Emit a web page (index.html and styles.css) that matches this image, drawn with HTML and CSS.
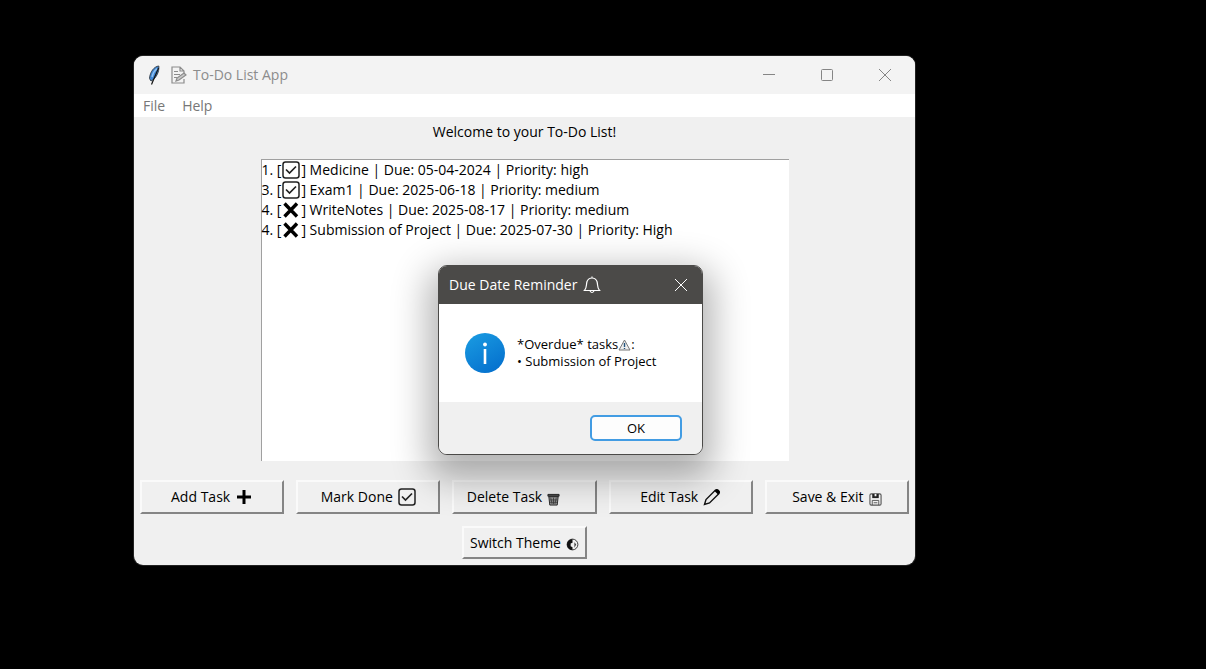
FILE: index.html
```html
<!DOCTYPE html>
<html lang="en">
<head>
<meta charset="utf-8">
<title>To-Do List App</title>
<link rel="stylesheet" href="styles.css">
</head>
<body>
<svg class="defs" aria-hidden="true">
  <symbol id="check" viewBox="0 0 18 18"><rect x="1" y="1" width="16" height="16" rx="2.5" fill="none" stroke="#222" stroke-width="1.500"/><path d="M4 8.500 7.500 12 14 5.500" fill="none" stroke="#222" stroke-width="1.700"/></symbol>
  <symbol id="cross" viewBox="0 0 18 18"><path d="M2.500 2.500 15 15.500M15 2.500 2.500 15.500" fill="none" stroke="#000" stroke-width="3.400"/></symbol>
</svg>
<main class="window">
  <header class="titlebar">
    <svg class="feather" viewBox="0 0 12 20"><path d="M10.800 1C6 1.500 2 7 1.500 13.500L3 16C8 13.500 11.500 7 10.800 1Z" fill="#3f86d4" stroke="#39444f" stroke-width="1"/><path d="M10.500 3Q7.500 10 3.500 19.500" fill="none" stroke="#111" stroke-width="1.200"/><path d="M9 3.500Q5 7 4 12" fill="none" stroke="#8fc1f2" stroke-width="1.500"/></svg>
    <svg class="memo" viewBox="0 0 16 18" fill="none" stroke="#8c8c8c" stroke-width="1.200"><path d="M13 8V5L9 1H1v16h12v-4M9 1v4h4M3 5.500h4M3 8.500h6M3 11.500h3"/><path d="M5 15l1-3 7-5 2 2-7 5Z" fill="#c8c8c8"/></svg>
    <h1 class="title">To-Do List App</h1>
    <div class="controls">
      <button class="control" aria-label="Minimize"><svg viewBox="0 0 14 14"><path d="M1 6.500h12"/></svg></button>
      <button class="control" aria-label="Maximize"><svg viewBox="0 0 14 14"><rect x="1.500" y="1.500" width="11" height="11" rx="1"/></svg></button>
      <button class="control" aria-label="Close"><svg viewBox="0 0 14 14"><path d="M1 1l12 12M13 1 1 13"/></svg></button>
    </div>
  </header>
  <nav class="menubar"><button class="menu">File</button><button class="menu">Help</button></nav>
  <section class="content">
    <p class="welcome">Welcome to your To-Do List!</p>
    <ul class="tasks">
      <li class="task"><span>1. [</span><svg class="mark"><use href="#check"/></svg><span>] Medicine | Due: 05-04-2024 | Priority: high</span></li>
      <li class="task"><span>3. [</span><svg class="mark"><use href="#check"/></svg><span>] Exam1 | Due: 2025-06-18 | Priority: medium</span></li>
      <li class="task"><span>4. [</span><svg class="mark"><use href="#cross"/></svg><span>] WriteNotes | Due: 2025-08-17 | Priority: medium</span></li>
      <li class="task"><span>4. [</span><svg class="mark"><use href="#cross"/></svg><span>] Submission of Project | Due: 2025-07-30 | Priority: High</span></li>
    </ul>
    <div class="actions">
      <button class="action">Add Task <svg class="icon" viewBox="0 0 18 18"><path d="M9 2v14M2 9h14" stroke="#000" stroke-width="3"/></svg></button>
      <button class="action">Mark Done <svg class="icon"><use href="#check"/></svg></button>
      <button class="action action-wide-glyph">Delete Task <svg class="icon icon-small" viewBox="0 0 14 14"><path d="M1 1.500h12v2H1z" fill="#555" stroke="#222"/><path d="M2 4h10l-1 9H3Z" fill="#999" stroke="#222"/><path d="M4 5l1.500 7M7 5v7M10 5l-1.500 7M3 7.500h8M3 10h8" stroke="#333" stroke-width=".8"/></svg></button>
      <button class="action">Edit Task <svg class="icon" viewBox="0 0 18 18"><path d="M1.500 16.500 3 11.500 12.500 2Q14 1 15.500 2.500T16 5.500L6.500 15Z" fill="none" stroke="#111" stroke-width="1.400"/><path d="M11.500 3 13 1.500Q14.500 1 16 2.500T16.500 5L15 6.500Z" fill="#000"/></svg></button>
      <button class="action">Save &amp; Exit <svg class="icon icon-small" viewBox="0 0 14 14"><rect x="1" y="1" width="12" height="12" rx="1.500" fill="none" stroke="#555" stroke-width="1.200"/><path d="M3.500 1h7v4.500h-7z" fill="#222"/><path d="M6 1h2v2.500H6z" fill="#eee"/><path d="M3.500 13V8h7v5M5 10.500h4" fill="none" stroke="#555"/></svg></button>
    </div>
    <button class="action action-theme">Switch Theme <svg class="icon icon-small" viewBox="0 0 14 14"><circle cx="7" cy="7" r="5.800" fill="none" stroke="#333"/><path d="M7 1A6 6 0 0 0 7 13V10L5 9V6L7 5Z" fill="#111"/><path d="M9 4.500 11 7 9 10.500Z" fill="#444"/></svg></button>
  </section>

  <section class="dialog" role="dialog" aria-labelledby="dialog-title">
    <header class="dialog-header">
      <h2 class="dialog-title" id="dialog-title">Due Date Reminder</h2>
      <svg class="bell" viewBox="0 0 18 18" fill="none" stroke="#fff" stroke-width="1.200"><path d="M1.500 14.500C4 12 3 9 4 5.500 5 3 6.500 2 9 2s4 1 5 3.500c1 3.500 0 6.500 2.500 9ZM9 .5V2M7 15Q9 18 11 15"/></svg>
      <button class="dialog-close" aria-label="Close"><svg viewBox="0 0 14 14"><path d="M1 1l12 12M13 1 1 13"/></svg></button>
    </header>
    <div class="dialog-body">
      <svg class="info" viewBox="0 0 40 40"><defs><linearGradient id="blue" x1="0" y1="0" x2=".6" y2="1"><stop offset="0" stop-color="#1b9de2"/><stop offset="1" stop-color="#0673cf"/></linearGradient></defs><circle cx="20" cy="20" r="20" fill="url(#blue)"/><circle cx="20" cy="11.500" r="1.900" fill="#fff"/><path d="M20 16v15" stroke="#fff" stroke-width="2.600"/></svg>
      <div class="message">
        <p class="line">*Overdue* tasks<svg class="warning" viewBox="0 0 13 12"><path d="M6.500 1 12 11H1Z" fill="#eee" stroke="#777"/><path d="M6.500 4v4M6.500 9v1" stroke="#24557e" stroke-width="1.400"/></svg>:</p>
        <p class="line">• Submission of Project</p>
      </div>
    </div>
    <footer class="dialog-footer"><button class="ok">OK</button></footer>
  </section>
</main>
</body>
</html>
```
FILE: styles.css
```css
* { box-sizing: border-box; }
body {
  margin: 0;
  padding: 56px 291px 104px 134px;
  background: #000;
  color: #000;
  font: 14px/20px "Open Sans", "Noto Sans", sans-serif;
}
button { font: inherit; color: inherit; }
h1, h2, p, ul { margin: 0; padding: 0; font-weight: 400; }
svg { flex: none; }
.defs { position: absolute; width: 0; height: 0; }
.window {
  position: relative;
  border-radius: 9px;
  background: #f0f0f0;
  box-shadow: 0 0 0 1px #222;
}
.titlebar {
  display: flex;
  align-items: center;
  height: 38px;
  padding-left: 14px;
  border-radius: 9px 9px 0 0;
  background: #f3f3f3;
  color: #8c8c8c;
}
.feather { width: 12px; height: 20px; margin-right: 11px; }
.memo { width: 16px; height: 18px; margin-right: 6px; }
.title { font-size: 14px; }
.controls { display: flex; margin-left: auto; padding-right: 1px; }
.control {
  display: grid;
  place-items: center;
  width: 58px;
  height: 38px;
  padding: 0;
  border: 0;
  background: none;
}
.control svg, .dialog-close svg {
  width: 14px;
  height: 14px;
  fill: none;
  stroke: #858585;
}
.menubar { display: flex; gap: 17px; height: 23px; padding: 2px 9px; background: #fff; }
.menu { padding: 0; border: 0; background: none; color: #777; line-height: 20px; }
.content {
  display: flex;
  flex-direction: column;
  align-items: center;
  padding: 5px 6px 6px;
}
.welcome { margin-bottom: 17px; }
.tasks {
  width: 528px;
  max-width: 100%;
  height: 302px;
  border-top: 1px solid #a0a0a0;
  border-left: 1px solid #a0a0a0;
  background: #fff;
  list-style: none;
}
.task { display: flex; align-items: center; white-space: nowrap; }
.mark { width: 18px; height: 18px; margin: 0 1px; }
.actions {
  display: grid;
  grid-template-columns: repeat(5, 1fr);
  gap: 12px;
  width: 100%;
  margin: 19px 0 12px;
}
.action {
  display: flex;
  align-items: center;
  justify-content: center;
  gap: 5px;
  height: 34px;
  padding: 0;
  border: 2px solid;
  border-color: #fafafa #858585 #858585 #fafafa;
  background: none;
  white-space: nowrap;
}
.action-wide-glyph { padding-right: 22px; }
.action-theme { height: 33px; padding: 0 6px; }
.icon { width: 18px; height: 18px; }
.icon-small { width: 13px; height: 13px; margin-top: 4px; }
.dialog {
  position: absolute;
  top: 209px;
  left: 304px;
  width: 265px;
  overflow: hidden;
  border: 1px solid #4b4a48;
  border-radius: 9px;
  background: #fff;
  box-shadow: 0 14px 36px 10px rgba(0, 0, 0, .3);
}
.dialog-header {
  display: flex;
  align-items: center;
  height: 38px;
  padding-left: 10px;
  background: #4b4a48;
  color: #fff;
}
.dialog-title { margin-right: 6px; font-size: 14px; }
.bell { width: 18px; height: 18px; }
.dialog-close {
  display: grid;
  place-items: center;
  width: 42px;
  height: 38px;
  margin-left: auto;
  padding: 0;
  border: 0;
  background: none;
}
.dialog-close svg { stroke: #fff; }
.dialog-body { display: flex; align-items: center; gap: 12px; height: 98px; padding-left: 26px; }
.info { width: 40px; height: 40px; }
.message { font-size: 13px; line-height: 17px; white-space: nowrap; }
.warning { width: 13px; height: 12px; vertical-align: -2px; }
.dialog-footer { display: flex; justify-content: flex-end; padding: 13px 20px; background: #f0f0f0; }
.ok {
  width: 92px;
  height: 26px;
  padding: 0;
  border: 2px solid #429ce3;
  border-radius: 5px;
  background: #fdfdfd;
  font-size: 13px;
}
```
